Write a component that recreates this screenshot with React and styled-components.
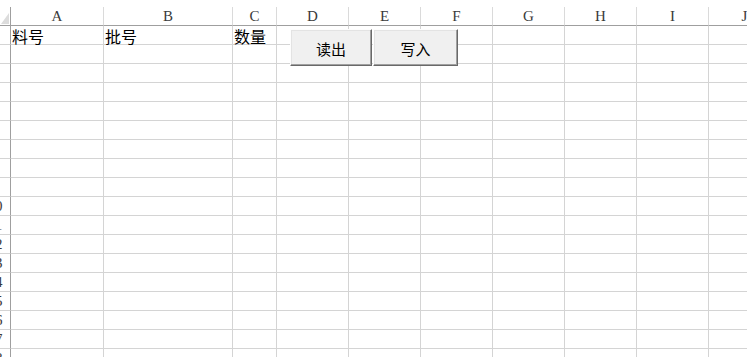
import React from "react";
import styled, { createGlobalStyle } from "styled-components";

const Global = createGlobalStyle`
  html, body { margin: 0; padding: 0; background: #fff; overflow: hidden; }
  body { width: 747px; height: 357px; }
`;

const COLS = [
  { key: "A", w: 93 },
  { key: "B", w: 129 },
  { key: "C", w: 44 },
  { key: "D", w: 72 },
  { key: "E", w: 72 },
  { key: "F", w: 72 },
  { key: "G", w: 72 },
  { key: "H", w: 72 },
  { key: "I", w: 72 },
  { key: "J", w: 72 },
];

const ROWS = 18;

const Page = styled.div`
  position: relative;
  width: 747px;
  height: 357px;
  overflow: hidden;
  padding-top: 7px;
  box-sizing: border-box;
  background: #fff;
`;

const Grid = styled.div`
  display: grid;
  grid-template-columns: 11px ${COLS.map((c) => c.w + "px").join(" ")};
  grid-auto-rows: 19px;
  width: max-content;
`;

const Corner = styled.div`
  box-sizing: border-box;
  border-right: 1px solid #9f9f9f;
  border-bottom: 1px solid #9f9f9f;
  display: flex;
  align-items: flex-end;
  justify-content: flex-end;
  padding: 0 1px 1px 0;
`;

const headFont = `
  font-family: "Liberation Serif", "DejaVu Serif", serif;
  font-size: 15px;
  line-height: 19px;
  color: #3a3a3a;
`;

const ColHead = styled.div`
  box-sizing: border-box;
  border-right: 1px solid #dadada;
  border-bottom: 1px solid #9f9f9f;
  background: #fff;
  ${headFont}
  text-align: center;
  overflow: hidden;
`;

const RowHead = styled.div`
  box-sizing: border-box;
  border-right: 1px solid #9f9f9f;
  border-bottom: 1px solid #d4d4d4;
  display: flex;
  justify-content: flex-end;
  overflow: hidden;
  ${headFont}
`;

const RowNum = styled.span`
  flex: 0 0 24px;
  margin-right: 3px;
  text-align: center;
`;

const Cell = styled.div`
  box-sizing: border-box;
  border-right: 1px solid #d4d4d4;
  border-bottom: 1px solid #d4d4d4;
  font-family: "Noto Sans CJK SC", sans-serif;
  font-size: 16px;
  line-height: 16px;
  padding: 2px 0 0 1px;
  color: #000;
  white-space: nowrap;
`;

const Button = styled.button`
  position: absolute;
  top: 29px;
  left: ${(p) => p.$left}px;
  width: ${(p) => p.$width}px;
  height: 37px;
  box-sizing: border-box;
  margin: 0;
  padding: 2px 0 0;
  background: #f0f0f0;
  border: 1px solid;
  border-color: #fdfdfd #696969 #696969 #fdfdfd;
  box-shadow: inset -1px -1px 0 #a0a0a0, inset 1px 1px 0 #e3e3e3;
  font-family: "Noto Sans CJK SC", sans-serif;
  font-size: 15px;
  line-height: 1;
  color: #000;
  display: flex;
  align-items: center;
  justify-content: center;
`;

const data = { 1: { A: "料号", B: "批号", C: "数量" } };

export default function App() {
  const rows = [];
  for (let r = 1; r <= ROWS; r++) {
    rows.push(
      <React.Fragment key={r}>
        <RowHead>
          <RowNum>{r}</RowNum>
        </RowHead>
        {COLS.map((c) => (
          <Cell key={c.key}>{data[r]?.[c.key] ?? ""}</Cell>
        ))}
      </React.Fragment>
    );
  }
  return (
    <Page>
      <Global />
      <Grid>
        <Corner>
          <svg width="8" height="11" viewBox="0 0 8 11">
            <polygon points="8,0 8,11 0,11" fill="#dcdcdc" />
          </svg>
        </Corner>
        {COLS.map((c) => (
          <ColHead key={c.key}>{c.key}</ColHead>
        ))}
        {rows}
      </Grid>
      <Button $left={290} $width={82}>读出</Button>
      <Button $left={373} $width={85}>写入</Button>
    </Page>
  );
}
